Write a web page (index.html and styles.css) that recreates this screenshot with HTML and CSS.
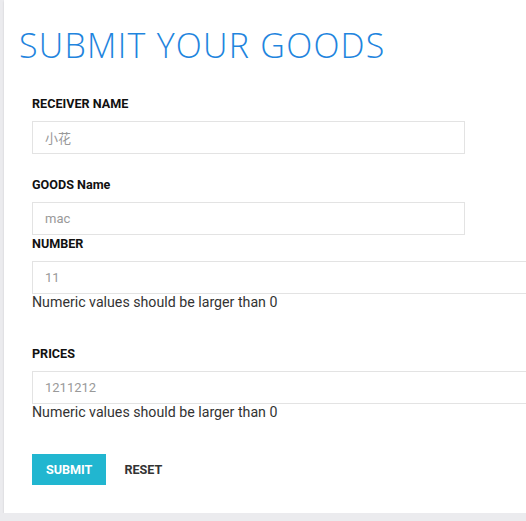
FILE: index.html
```html
<!DOCTYPE html>
<html>
<head>
<meta charset="utf-8">
<link rel="stylesheet" href="styles.css">
</head>
<body>
<div class="card">
  <h1 class="title">SUBMIT YOUR GOODS</h1>
  <form class="form">
    <div class="group group-first">
      <label class="label">RECEIVER NAME</label>
      <input class="input input-short" type="text" value="小花">
    </div>
    <div class="group group-goods">
      <label class="label">GOODS Name</label>
      <input class="input input-short" type="text" value="mac">
    </div>
    <div class="group">
      <label class="label">NUMBER</label>
      <input class="input input-long" type="text" value="11">
      <div class="help">Numeric values should be larger than 0</div>
    </div>
    <div class="group group-prices">
      <label class="label">PRICES</label>
      <input class="input input-long" type="text" value="1211212">
      <div class="help">Numeric values should be larger than 0</div>
    </div>
    <div class="actions">
      <button type="button" class="btn btn-primary">SUBMIT</button>
      <button type="button" class="btn btn-flat">RESET</button>
    </div>
  </form>
</div>
</body>
</html>
```
FILE: styles.css
```css
html, body {
  margin: 0;
  padding: 0;
  background: #ebebee;
  overflow: hidden;
}
.card {
  margin-left: 4px;
  width: 600px;
  background: #fff;
  padding: 25px 0 28px 15px;
  box-shadow: 0 1px 2px rgba(0,0,0,0.12);
}
.title {
  margin: 0;
  font-family: "Open Sans", sans-serif;
  font-weight: 300;
  font-size: 34px;
  line-height: 40px;
  color: #1f85de;
  letter-spacing: 1.25px;
}
.form {
  margin: 32px 0 0 13px;
  display: flex;
  flex-direction: column;
  font-family: Roboto, "Noto Sans CJK SC", sans-serif;
}
.group {
  display: flex;
  flex-direction: column;
  align-items: flex-start;
}
.group-first {
  margin-bottom: 24px;
}
.group-goods {
  margin-bottom: 2px;
}
.group-prices {
  margin-top: 36px;
}
.label {
  font-size: 12.6px;
  line-height: 14px;
  font-weight: 700;
  color: #111;
  margin-bottom: 10px;
}
.input {
  box-sizing: border-box;
  height: 33px;
  border: 1px solid #e3e3e3;
  padding: 0 12px;
  font-family: Roboto, "Noto Sans CJK SC", sans-serif;
  font-size: 13px;
  color: #999;
  background: #fff;
  outline: none;
  margin: 0;
}
.input-short { width: 433px; }
.input-long { width: 520px; }
.help {
  font-size: 14.2px;
  line-height: 17px;
  color: #333;
}
.actions {
  margin-top: 33px;
  display: flex;
  gap: 4px;
}
.btn {
  font-family: Roboto, sans-serif;
  font-size: 12.6px;
  font-weight: 700;
  height: 31px;
  padding: 0 14px;
  border: none;
  cursor: pointer;
}
.btn-primary {
  background: #21b6d0;
  color: #fff;
}
.btn-flat {
  background: transparent;
  color: #333;
}
```
